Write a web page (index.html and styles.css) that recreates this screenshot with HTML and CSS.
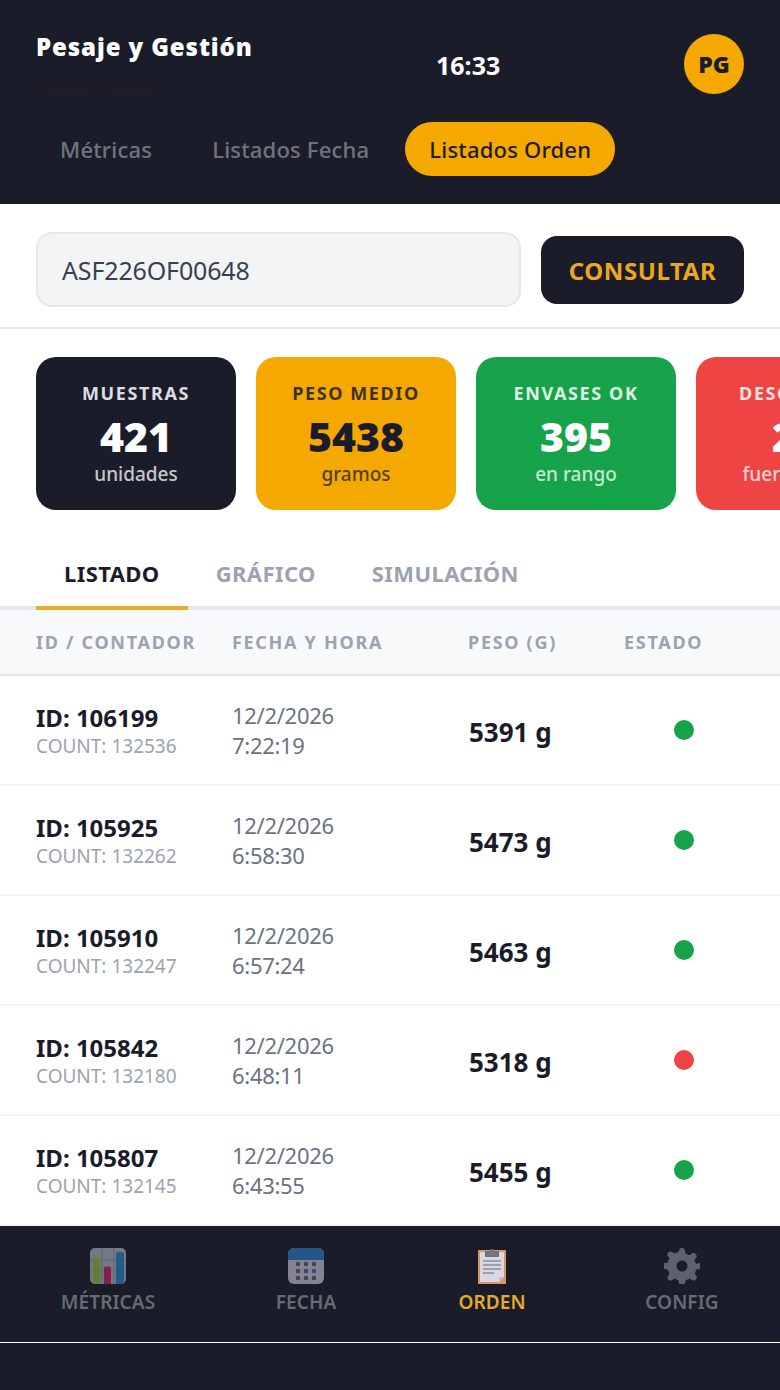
FILE: index.html
```html
<!DOCTYPE html>
<html lang="es">
<head>
<meta charset="utf-8">
<title>Pesaje y Gestión</title>
<link rel="stylesheet" href="styles.css">
</head>
<body>
<div class="app">
  <header class="header">
    <div class="top">
      <div class="brand">
        <div class="title">Pesaje y Gestión</div>
        <div class="subtitle">Control de producción</div>
      </div>
      <div class="clock">16:33</div>
      <div class="avatar">PG</div>
    </div>
    <nav class="pills">
      <span class="pill">Métricas</span>
      <span class="pill">Listados Fecha</span>
      <span class="pill active">Listados Orden</span>
    </nav>
  </header>

  <section class="search">
    <div class="input">ASF226OF00648</div>
    <div class="button">CONSULTAR</div>
  </section>

  <section class="cards">
    <div class="card dark"><div class="c-label">MUESTRAS</div><div class="c-value">421</div><div class="c-unit">unidades</div></div>
    <div class="card amber"><div class="c-label">PESO MEDIO</div><div class="c-value">5438</div><div class="c-unit">gramos</div></div>
    <div class="card green"><div class="c-label">ENVASES OK</div><div class="c-value">395</div><div class="c-unit">en rango</div></div>
    <div class="card red"><div class="c-label">DESCARTES</div><div class="c-value">26</div><div class="c-unit">fuera rango</div></div>
  </section>

  <div class="tabs">
    <span class="tab on">LISTADO</span>
    <span class="tab">GRÁFICO</span>
    <span class="tab">SIMULACIÓN</span>
  </div>

  <div class="thead">
    <span>ID / CONTADOR</span><span>FECHA Y HORA</span><span>PESO (G)</span><span>ESTADO</span>
  </div>

  <div class="rows">
    <div class="row"><div><div class="rid">ID: 106199</div><div class="rcount">COUNT: 132536</div></div><div class="rdate">12/2/2026<br>7:22:19</div><div class="rweight">5391 g</div><div class="rstate"><i class="dot ok"></i></div></div>
    <div class="row"><div><div class="rid">ID: 105925</div><div class="rcount">COUNT: 132262</div></div><div class="rdate">12/2/2026<br>6:58:30</div><div class="rweight">5473 g</div><div class="rstate"><i class="dot ok"></i></div></div>
    <div class="row"><div><div class="rid">ID: 105910</div><div class="rcount">COUNT: 132247</div></div><div class="rdate">12/2/2026<br>6:57:24</div><div class="rweight">5463 g</div><div class="rstate"><i class="dot ok"></i></div></div>
    <div class="row"><div><div class="rid">ID: 105842</div><div class="rcount">COUNT: 132180</div></div><div class="rdate">12/2/2026<br>6:48:11</div><div class="rweight">5318 g</div><div class="rstate"><i class="dot bad"></i></div></div>
    <div class="row"><div><div class="rid">ID: 105807</div><div class="rcount">COUNT: 132145</div></div><div class="rdate">12/2/2026<br>6:43:55</div><div class="rweight">5455 g</div><div class="rstate"><i class="dot ok"></i></div></div>
  </div>

  <nav class="bottom">
    <div class="navbar">
      <div class="nav-item dim">
        <svg class="ico" viewBox="0 0 36 36"><rect width="36" height="36" rx="5" fill="#ccd6dd"/><path d="M12 0v36M24 0v36M0 12h36M0 24h36" stroke="#99aab5" stroke-width="1" fill="none"/><path d="M3 11a1.500 1.500 0 0 1 1.500-1.500h4A1.500 1.500 0 0 1 10 11v25H3z" fill="#a6e34a"/><path d="M14 20a1.500 1.500 0 0 1 1.500-1.500h4A1.500 1.500 0 0 1 21 20v16h-7z" fill="#f0246e"/><path d="M26 6a2 2 0 0 1 2-2h4a2 2 0 0 1 2 2v30h-8z" fill="#2f9be8"/></svg>
        <span>MÉTRICAS</span>
      </div>
      <div class="nav-item dim">
        <svg class="ico" viewBox="0 0 36 36"><rect width="36" height="36" rx="6" fill="#f0e6fa"/><path d="M0 12V6a6 6 0 0 1 6-6h24a6 6 0 0 1 6 6v6z" fill="#2f8fe8"/><g fill="#66757f"><rect x="8" y="14" width="4" height="4"/><rect x="16" y="14" width="4" height="4"/><rect x="24" y="14" width="4" height="4"/><rect x="8" y="21" width="4" height="4"/><rect x="16" y="21" width="4" height="4"/><rect x="8" y="28" width="4" height="4"/><rect x="16" y="28" width="4" height="4"/><rect x="24" y="28" width="4" height="4"/></g><rect x="24" y="21" width="4" height="4" fill="#2f8fe8"/></svg>
        <span>FECHA</span>
      </div>
      <div class="nav-item current">
        <svg class="ico" viewBox="0 0 36 36"><rect x="4" y="2" width="28" height="34" rx="1" fill="#f0a565"/><path d="M6 4h24v25l-5 5H6z" fill="#f0ebf8"/><path d="M25 34v-5h5z" fill="#d6cfe0"/><path d="M11 3h5a2 2 0 0 1 4 0h5v5a1 1 0 0 1-1 1H12a1 1 0 0 1-1-1z" fill="#7a7f8c"/><path d="M9 13h18M9 17h18M9 21h18M9 25h11" stroke="#66757f" stroke-width="1" fill="none"/></svg>
        <span>ORDEN</span>
      </div>
      <div class="nav-item dim">
        <svg class="ico" viewBox="0 0 36 36"><path fill="#a4a4b8" fill-rule="evenodd" d="M15 3a3 3 0 0 1 6 0l.6 2.700a14 14 0 0 1 3.800 1.600l2.300-1.500a3 3 0 0 1 4.200 4.200l-1.500 2.300a14 14 0 0 1 1.600 3.800L35 15a3 3 0 0 1 0 6l-2.800.6a14 14 0 0 1-1.500 3.800l1.500 2.300a3 3 0 0 1-4.200 4.200l-2.300-1.500a14 14 0 0 1-3.800 1.600L21 35a3 3 0 0 1-6 0l-.6-2.800a14 14 0 0 1-3.800-1.600l-2.300 1.500a3 3 0 0 1-4.200-4.200l1.500-2.300a14 14 0 0 1-1.600-3.800L1 21a3 3 0 0 1 0-6l2.800-.6a14 14 0 0 1 1.600-3.800L3.900 8.300a3 3 0 0 1 4.200-4.200l2.300 1.500a14 14 0 0 1 3.800-1.600zM18 12.500a5.500 5.500 0 1 0 0 11 5.500 5.500 0 0 0 0-11z"/></svg>
        <span>CONFIG</span>
      </div>
    </div>
    <div class="home-line"></div>
  </nav>
</div>
</body>
</html>
```
FILE: styles.css
```css
* { box-sizing: border-box; }
html, body { margin: 0; padding: 0; }
body { background: #fff; font-family: "Noto Sans", "Open Sans", "Liberation Sans", sans-serif; color: #1a1d29; }
.app { width: 780px; height: 1390px; overflow: hidden; display: flex; flex-direction: column; }

.header { background: #1a1d29; height: 204px; padding: 34px 36px 0; flex: none; }
.top { display: flex; height: 60px; align-items: flex-start; }
.brand { width: 400px; }
.title { font-size: 24px; font-weight: 900; color: #fff; line-height: 28px; letter-spacing: .9px; margin-top: -1px; white-space: nowrap; }
.subtitle { margin-top: 21px; font-size: 12px; line-height: 18px; color: #1f1f1f; white-space: nowrap; }
.clock { width: 64px; margin-top: 16px; text-align: center; font-size: 25px; font-weight: 700; line-height: 30px; color: #fff; }
.avatar { margin-left: auto; width: 60px; height: 60px; border-radius: 50%; background: #f5a800; color: #1a1d29; display: flex; align-items: center; justify-content: center; font-size: 23px; font-weight: 900; }
.pills { display: flex; gap: 12px; margin-top: 28px; }
.pill { height: 54px; padding: 0 24px; line-height: 54px; font-size: 22px; font-weight: 500; letter-spacing: .2px; color: rgba(255,255,255,.4); border-radius: 27px; white-space: nowrap; }
.pill.active { background: #f5a800; color: #1a1d29; }

.search { height: 125px; flex: none; padding: 28px 36px 20px; display: flex; gap: 20px; align-items: center; border-bottom: 2px solid #e5e7eb; }
.input { flex: 1; height: 75px; background: #f3f4f6; border: 2px solid #e5e7eb; border-radius: 16px; padding: 0 24px; line-height: 73px; font-size: 25px; letter-spacing: -.15px; color: #374151; }
.button { width: 203px; height: 68px; background: #1a1d29; border-radius: 16px; color: #eca81c; font-size: 24px; font-weight: 700; letter-spacing: .6px; line-height: 70px; text-align: center; }

.cards { flex: none; display: flex; gap: 20px; padding: 28px 36px 0; height: 181px; }
.card { flex: none; width: 200px; height: 153px; border-radius: 20px; padding: 24px 0; text-align: center; color: #fff; white-space: nowrap; overflow: hidden; }
.c-label { font-size: 18px; font-weight: 700; letter-spacing: 1.600px; line-height: 24px; opacity: .85; }
.c-value { font-size: 41px; font-weight: 900; line-height: 44px; margin-top: 9px; }
.c-unit { font-size: 19px; font-weight: 500; line-height: 26px; margin-top: 3px; opacity: .75; }
.dark { background: #1a1d29; }
.amber { background: #f5a800; color: #1a1d29; }
.green { background: #16a34a; }
.red { background: #ef4444; }

.tabs { flex: none; height: 72px; margin-top: 28px; padding: 0 36px; display: flex; border-bottom: 4px solid #e5e7eb; }
.tab { padding: 20px 28px 0; height: 72px; font-size: 22px; font-weight: 700; color: #9ca3af; letter-spacing: .4px; white-space: nowrap; }
.tab.on { color: #1a1d29; border-bottom: 4px solid #e9ab2a; }

.thead { flex: none; height: 66px; background: #f8f9fb; border-bottom: 2px solid #e5e7eb; padding-left: 36px; display: grid; grid-template-columns: 196px 236px 156px 1fr; align-items: center; font-size: 18px; font-weight: 700; letter-spacing: 1.700px; color: #9ca3af; }

.rows { flex: 1; }
.row { height: 110px; padding-left: 36px; border-bottom: 2px solid #f3f4f6; display: grid; grid-template-columns: 196px 236px 156px 120px; align-items: center; }
.rid { font-size: 24px; font-weight: 700; line-height: 28px; margin-top: 2px; color: #1a1d29; }
.rcount { font-size: 19px; line-height: 26px; margin-top: 1px; color: #9ca3af; }
.rdate { font-size: 22px; line-height: 30px; color: #6b7280; letter-spacing: -.3px; }
.rweight { font-size: 26px; font-weight: 700; color: #1a1d29; padding: 3px 0 0 1px; }
.rstate { display: flex; justify-content: center; }
.dot { width: 20px; height: 20px; border-radius: 50%; display: block; }
.dot.ok { background: #16a34a; }
.dot.bad { background: #ef4444; }

.bottom { flex: none; height: 164px; background: #1a1d29; }
.navbar { height: 116px; display: grid; grid-template-columns: 216px 180px 192px 188px; border-bottom: 1px solid #fff; box-sizing: content-box; }
.nav-item { display: flex; flex-direction: column; align-items: center; padding-top: 22px; font-size: 19px; font-weight: 600; letter-spacing: .1px; }
.nav-item span { line-height: 26px; margin-top: 5px; }
.ico { width: 36px; height: 36px; display: block; }
.dim { color: rgba(255,255,255,.35); }
.dim .ico { opacity: .5; }
.current { color: #e8a92a; }
.current .ico { opacity: .9; }
.home-line { height: 47px; }
```
